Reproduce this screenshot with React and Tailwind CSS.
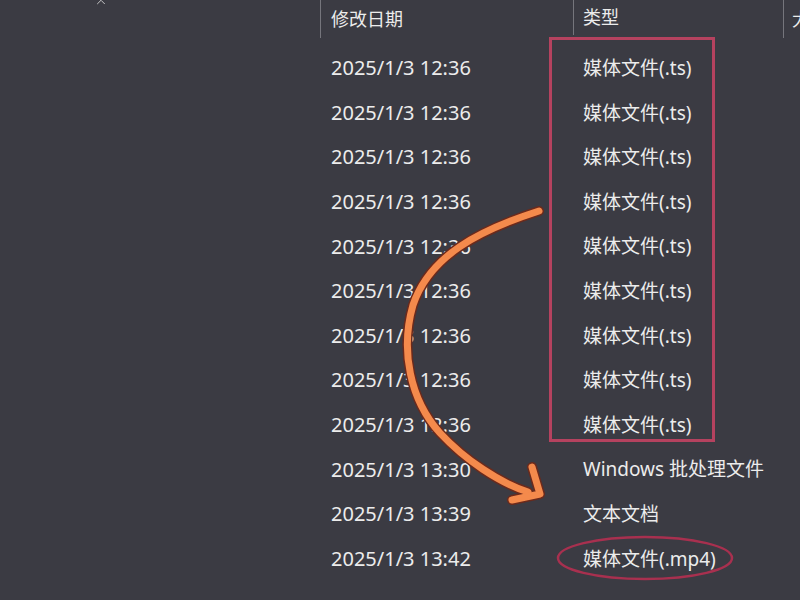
import { ChevronUp } from 'lucide-react'

const rows = [
  ['2025/1/3 12:36', '媒体文件(.ts)'],
  ['2025/1/3 12:36', '媒体文件(.ts)'],
  ['2025/1/3 12:36', '媒体文件(.ts)'],
  ['2025/1/3 12:36', '媒体文件(.ts)'],
  ['2025/1/3 12:36', '媒体文件(.ts)'],
  ['2025/1/3 12:36', '媒体文件(.ts)'],
  ['2025/1/3 12:36', '媒体文件(.ts)'],
  ['2025/1/3 12:36', '媒体文件(.ts)'],
  ['2025/1/3 12:36', '媒体文件(.ts)'],
  ['2025/1/3 13:30', 'Windows 批处理文件'],
  ['2025/1/3 13:39', '文本文档'],
  ['2025/1/3 13:42', '媒体文件(.mp4)'],
]

export default function App() {
  return (
    <div
      className="relative w-[800px] h-[600px] overflow-hidden bg-[#3b3b43] text-[#ececec] flex"
      style={{ fontFamily: '"Noto Sans", "Noto Sans CJK SC", sans-serif' }}
    >
      {/* Left pane */}
      <div className="w-[320px] shrink-0">
        <div className="ml-[94px] -mt-[5px] text-[#d8d8d8]">
          <ChevronUp size={14} strokeWidth={1.5} />
        </div>
      </div>

      {/* Details list */}
      <div className="flex-1 min-w-0 flex flex-col">
        {/* Header */}
        <div className="flex h-[46px] text-[18px] whitespace-nowrap">
          <div className="w-[253px] shrink-0 h-[38px] border-l border-[#75757c] pl-[10px] flex items-center">修改日期</div>
          <div className="w-[210px] shrink-0 h-[35px] border-l border-[#75757c] pl-[9px] flex items-center">类型</div>
          <div className="w-[60px] shrink-0 h-[38px] border-l border-[#75757c] pl-[8px] flex items-center">大小</div>
        </div>

        {/* Rows */}
        {rows.map(([date, type], i) => (
          <div key={i} className="flex h-[44.6px] items-center whitespace-nowrap">
            <div className="w-[253px] shrink-0 pl-[11px] text-[20px]">{date}</div>
            <div className="w-[210px] shrink-0 pl-[10px] text-[19px]">{type}</div>
          </div>
        ))}
      </div>

      {/* Annotations */}
      <div className="absolute left-[549px] top-[37px] w-[166px] h-[405px] border-[3px] border-[#b5425f] pointer-events-none" />
      <svg className="absolute inset-0 pointer-events-none" width="800" height="600" viewBox="0 0 800 600">
        <ellipse cx="645" cy="558" rx="87" ry="21" fill="none" stroke="#a8304f" strokeWidth="2.5" />
        <g fill="none" strokeLinecap="round" strokeLinejoin="round">
          <path
            d="M539 211 C 480 230, 430 255, 413 305 C 400 350, 410 400, 440 433 C 465 460, 500 483, 528 492"
            stroke="#6b2a1c"
            strokeWidth="10"
          />
          <path d="M532 467 L540 494 L512 500" stroke="#6b2a1c" strokeWidth="10" />
          <path
            d="M539 211 C 480 230, 430 255, 413 305 C 400 350, 410 400, 440 433 C 465 460, 500 483, 528 492"
            stroke="#f48a4c"
            strokeWidth="7"
          />
          <path d="M532 467 L540 494 L512 500" stroke="#f48a4c" strokeWidth="7" />
        </g>
      </svg>
    </div>
  )
}
